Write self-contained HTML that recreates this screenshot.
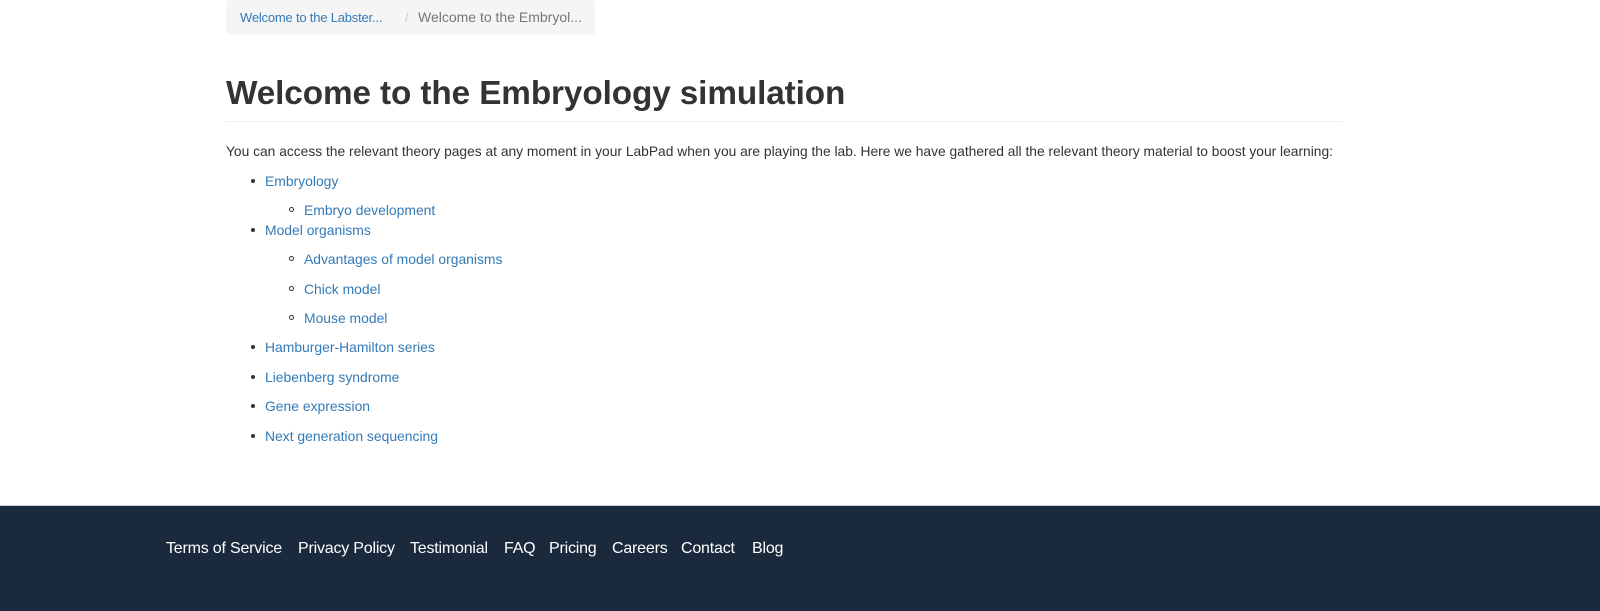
<!DOCTYPE html>
<html><head><meta charset="utf-8"><style>
html,body{margin:0;padding:0;width:1600px;height:611px;overflow:hidden;background:#fff;font-family:"Liberation Sans",Helvetica,Arial,sans-serif;position:relative}
a{color:#337ab7;text-decoration:none}
.bc{position:absolute;left:226px;top:0;width:369px;height:35px;background:#f5f5f5;border-radius:4px;font-size:13px;line-height:35px;color:#777}
.bc .t{position:absolute;white-space:nowrap;letter-spacing:-0.2px}
h1{position:absolute;left:226px;top:71px;margin:0;font-size:33.3px;font-weight:bold;color:#333;line-height:46px;letter-spacing:-0.1px}
.hr{position:absolute;left:226px;top:121px;width:1116px;height:1px;background:#eee}
p{position:absolute;left:226px;top:143px;margin:0;font-size:13.8px;line-height:18px;color:#333;white-space:nowrap}
.li{position:absolute;font-size:13.9px;line-height:18px;white-space:nowrap}
.b1::before{content:"";position:absolute;left:-14px;top:7px;width:4px;height:4px;border-radius:50%;background:#333}
.b2::before{content:"";position:absolute;left:-15px;top:6px;width:3px;height:3px;border-radius:50%;border:1px solid #333}
.footer{position:absolute;left:0;top:505px;width:1600px;height:106px;background:#1a2a3c;border-top:1px solid #ccc;box-sizing:border-box}
.footer a{position:absolute;top:34px;color:#fff;font-size:16px;letter-spacing:-0.2px;white-space:nowrap}
</style></head><body>
<div class="bc"><span class="t" style="left:14px"><a href="#">Welcome to the Labster...</a></span><span class="t" style="left:179px;color:#ccc">/</span><span class="t" style="left:192px;font-size:14px;letter-spacing:0">Welcome to the Embryol...</span></div>
<h1>Welcome to the Embryology simulation</h1>
<div class="hr"></div>
<p>You can access the relevant theory pages at any moment in your LabPad when you are playing the lab. Here we have gathered all the relevant theory material to boost your learning:</p>
<div class="li b1" style="left:265px;top:172px"><a href="#">Embryology</a></div>
<div class="li b2" style="left:304px;top:201px"><a href="#">Embryo development</a></div>
<div class="li b1" style="left:265px;top:221px"><a href="#">Model organisms</a></div>
<div class="li b2" style="left:304px;top:250px"><a href="#">Advantages of model organisms</a></div>
<div class="li b2" style="left:304px;top:280px"><a href="#">Chick model</a></div>
<div class="li b2" style="left:304px;top:309px"><a href="#">Mouse model</a></div>
<div class="li b1" style="left:265px;top:338px"><a href="#">Hamburger-Hamilton series</a></div>
<div class="li b1" style="left:265px;top:368px"><a href="#">Liebenberg syndrome</a></div>
<div class="li b1" style="left:265px;top:397px"><a href="#">Gene expression</a></div>
<div class="li b1" style="left:265px;top:427px"><a href="#">Next generation sequencing</a></div>
<div class="footer">
<a href="#" style="left:166px">Terms of Service</a>
<a href="#" style="left:298px">Privacy Policy</a>
<a href="#" style="left:410px">Testimonial</a>
<a href="#" style="left:504px">FAQ</a>
<a href="#" style="left:549px">Pricing</a>
<a href="#" style="left:612px">Careers</a>
<a href="#" style="left:681px">Contact</a>
<a href="#" style="left:752px">Blog</a>
</div>
</body></html>
